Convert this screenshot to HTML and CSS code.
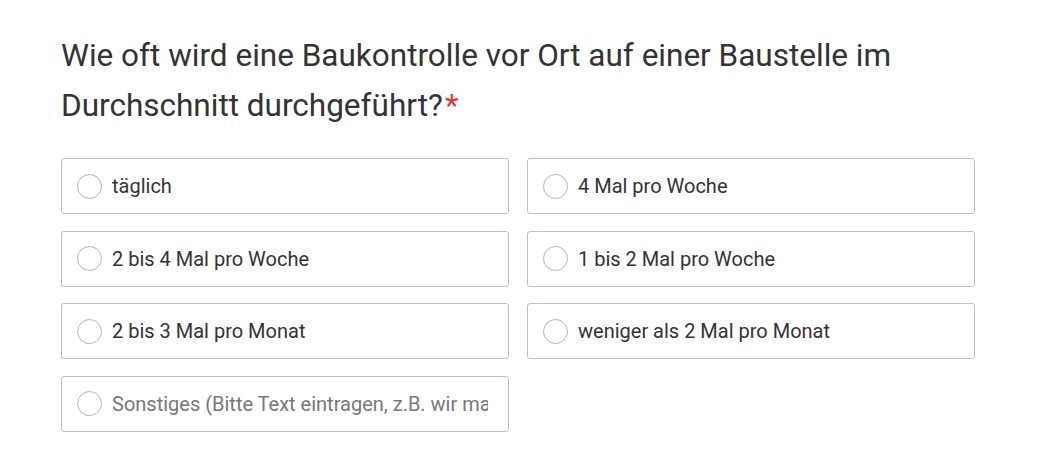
FILE: index.html
```html
<!DOCTYPE html>
<html>
  <head>
    <link rel="stylesheet" href="styles.css">
  </head>
  <body>
    <div class="question">
      <div class="question-title">
        Wie oft wird eine Baukontrolle vor Ort auf einer Baustelle im Durchschnitt durchgeführt?<span class="required">*</span>
      </div>
      <div class="choices">
        <label class="choice">
          <input type="radio" name="freq" value="1" />
          <span class="circle"></span>
          <span class="choice-text">täglich</span>
        </label>
        <label class="choice">
          <input type="radio" name="freq" value="2" />
          <span class="circle"></span>
          <span class="choice-text">4 Mal pro Woche</span>
        </label>
        <label class="choice">
          <input type="radio" name="freq" value="3" />
          <span class="circle"></span>
          <span class="choice-text">2 bis 4 Mal pro Woche</span>
        </label>
        <label class="choice">
          <input type="radio" name="freq" value="4" />
          <span class="circle"></span>
          <span class="choice-text">1 bis 2 Mal pro Woche</span>
        </label>
        <label class="choice">
          <input type="radio" name="freq" value="5" />
          <span class="circle"></span>
          <span class="choice-text">2 bis 3 Mal pro Monat</span>
        </label>
        <label class="choice">
          <input type="radio" name="freq" value="6" />
          <span class="circle"></span>
          <span class="choice-text">weniger als 2 Mal pro Monat</span>
        </label>
        <label class="choice choice-other">
          <input type="radio" name="freq" value="other" />
          <span class="circle"></span>
          <input type="text" class="other-input" placeholder="Sonstiges (Bitte Text eintragen, z.B. wir machen keine Baukontrollen)" />
        </label>
      </div>
    </div>
  </body>
</html>
```

FILE: styles.css
```css
html,
body {
  margin: 0;
  padding: 0;
  background: #fff;
  font-family: Roboto, "Liberation Sans", sans-serif;
  color: #333;
}

.question {
  padding: 31px 0 0 61px;
}

.question-title {
  width: 880px;
  font-size: 31.5px;
  line-height: 50px;
  color: #333;
}

.required {
  color: #e53935;
  margin-left: 2px;
}

.choices {
  display: grid;
  grid-template-columns: 448px 448px;
  column-gap: 18px;
  row-gap: 16.5px;
  margin-top: 27px;
}

.choice {
  display: flex;
  align-items: center;
  box-sizing: border-box;
  height: 56px;
  padding-left: 15px;
  border: 1px solid #b9c1d1;
  border-radius: 3px;
  cursor: pointer;
  overflow: hidden;
}

.choice input[type="radio"] {
  position: absolute;
  opacity: 0;
  width: 0;
  height: 0;
}

.circle {
  flex: none;
  box-sizing: border-box;
  width: 25px;
  height: 25px;
  border: 1px solid #aeb6c6;
  border-radius: 50%;
  margin-right: 10px;
}

.choice input:checked ~ .circle {
  border: 7px solid #2196f3;
}

.choice-text {
  font-size: 20px;
  color: #333;
}

.other-input {
  flex: 1;
  min-width: 0;
  border: none;
  outline: none;
  padding: 0 20px 0 0;
  font-family: Roboto, "Liberation Sans", sans-serif;
  font-size: 20px;
  color: #333;
  background: transparent;
}

.other-input::placeholder {
  color: #777;
}
```
